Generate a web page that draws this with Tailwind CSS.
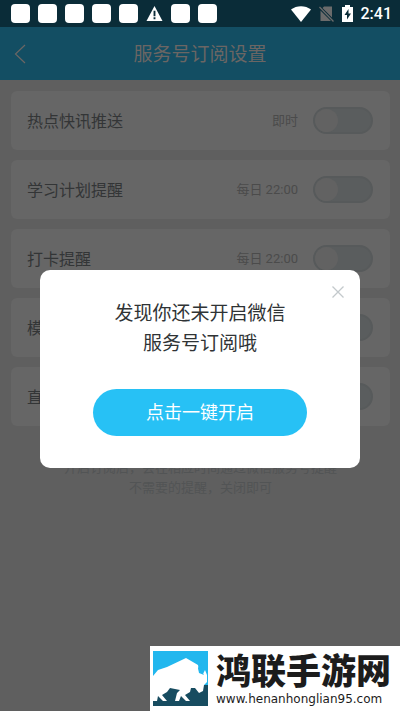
<!DOCTYPE html>
<html lang="zh-CN">
<head>
<meta charset="utf-8">
<meta name="viewport" content="width=device-width, initial-scale=1">
<title>服务号订阅设置</title>
<script src="https://cdn.jsdelivr.net/npm/@tailwindcss/browser@4"></script>
</head>
<body class="min-h-screen bg-[#5f5f5f] font-['Roboto','Noto_Sans_CJK_SC',sans-serif] text-[#333536]">
<div class="flex h-[27px] items-center justify-between bg-[#0a2c38] pr-2 pl-[11px] text-white" role="status">
  <div class="flex items-center gap-2">
    <span class="size-[19px] rounded bg-white"></span>
    <span class="size-[19px] rounded bg-white"></span>
    <span class="size-[19px] rounded bg-white"></span>
    <span class="size-[19px] rounded bg-white"></span>
    <span class="size-[19px] rounded bg-white"></span>
    <svg class="size-[17px]" viewBox="0 0 18 18" fill="currentColor"><path fill-rule="evenodd" d="M9 1L17.500 17H.5ZM8 6v6h2V6ZM8 13v2h2v-2Z"/></svg>
    <span class="size-[19px] rounded bg-white"></span>
    <span class="size-[19px] rounded bg-white"></span>
  </div>
  <div class="flex items-center gap-2">
    <svg class="h-4 w-5" viewBox="0 0 20 16" fill="currentColor"><path d="M0 3.500C5.500-1 14.500-1 20 3.500L10 16Z"/></svg>
    <svg class="h-4 w-[15px]" viewBox="0 0 15 16"><path fill="#6b6b6b" d="M5 .5h8v11L3.500 2ZM1.500 4.500L12 15H1.500Z"/><path stroke="#6b6b6b" stroke-width="1.300" d="M.5 1L14.500 15.500"/></svg>
    <svg class="h-[17px] w-[11px]" viewBox="0 0 11 17" fill="currentColor"><path fill-rule="evenodd" d="M3 0h5v2h3v15H0V2h3ZM6.500 4L2.500 10h2.500v4.500L9 8.500h-2.500Z"/></svg>
    <span class="text-base leading-5 font-medium">2:41</span>
  </div>
</div>
<header class="grid h-[53px] grid-cols-[1fr_auto_1fr] items-center bg-[#134e63] px-[14px] text-[#6b6664]">
  <button class="flex h-8 w-8 items-center" type="button" aria-label="返回"><svg class="h-5 w-3" viewBox="0 0 12 20" fill="none" stroke="currentColor" stroke-width="1.200"><path d="M11 1L1.500 10L11 19"/></svg></button>
  <h1 class="pt-[3px] text-[19px] leading-7">服务号订阅设置</h1>
</header>
<main class="pt-[11px] pr-[10px] pl-[11px]">
  <ul class="flex flex-col gap-[10px]">
    <li class="flex h-[59px] items-center rounded-md bg-[#666] pr-[17px] pl-4">
      <label class="flex-1 pt-[2px] text-base" for="s1">热点快讯推送</label><span class="mr-[15px] text-[13px] text-[#4b4b4b]">即时</span>
      <input id="s1" type="checkbox" role="switch" class="h-[27px] w-[60px] appearance-none rounded-full border-2 border-[#575a5b] bg-[#5a5d5e] before:block before:size-[23px] before:rounded-full before:bg-[#626262]">
    </li>
    <li class="flex h-[59px] items-center rounded-md bg-[#666] pr-[17px] pl-4">
      <label class="flex-1 pt-[2px] text-base" for="s2">学习计划提醒</label><span class="mr-[15px] text-[13px] text-[#4b4b4b]">每日 22:00</span>
      <input id="s2" type="checkbox" role="switch" class="h-[27px] w-[60px] appearance-none rounded-full border-2 border-[#575a5b] bg-[#5a5d5e] before:block before:size-[23px] before:rounded-full before:bg-[#626262]">
    </li>
    <li class="flex h-[59px] items-center rounded-md bg-[#666] pr-[17px] pl-4">
      <label class="flex-1 pt-[2px] text-base" for="s3">打卡提醒</label><span class="mr-[15px] text-[13px] text-[#4b4b4b]">每日 22:00</span>
      <input id="s3" type="checkbox" role="switch" class="h-[27px] w-[60px] appearance-none rounded-full border-2 border-[#575a5b] bg-[#5a5d5e] before:block before:size-[23px] before:rounded-full before:bg-[#626262]">
    </li>
    <li class="flex h-[59px] items-center rounded-md bg-[#666] pr-[17px] pl-4">
      <label class="flex-1 pt-[2px] text-base" for="s4">模</label>
      <input id="s4" type="checkbox" role="switch" class="h-[27px] w-[60px] appearance-none rounded-full border-2 border-[#575a5b] bg-[#5a5d5e] before:block before:size-[23px] before:rounded-full before:bg-[#626262]">
    </li>
    <li class="flex h-[59px] items-center rounded-md bg-[#666] pr-[17px] pl-4">
      <label class="flex-1 pt-[2px] text-base" for="s5">直</label>
      <input id="s5" type="checkbox" role="switch" class="h-[27px] w-[60px] appearance-none rounded-full border-2 border-[#575a5b] bg-[#5a5d5e] before:block before:size-[23px] before:rounded-full before:bg-[#626262]">
    </li>
  </ul>
  <p class="mt-8 text-center text-[13px] leading-5 text-[#525455]">开启订阅后，会在相应时间通过微信服务号提醒<br>不需要的提醒，关闭即可</p>
</main>
<section class="absolute inset-x-10 top-[270px] rounded-[10px] bg-white px-[53px] pt-[29px] pb-8 text-center" role="dialog" aria-modal="true" aria-labelledby="dialog-title">
  <button class="absolute top-[15px] right-[15px] p-px text-[#c3c9cc]" type="button" aria-label="关闭"><svg class="size-3" viewBox="0 0 12 12" fill="none" stroke="currentColor" stroke-width="1.300"><path d="M.5.5L11.500 11.500M11.500.5L.5 11.500"/></svg></button>
  <h2 id="dialog-title" class="text-[19px] leading-[30px] whitespace-nowrap text-[#2f3335]">发现你还未开启微信<br>服务号订阅哦</h2>
  <button class="mt-[30px] h-[47px] w-full rounded-full bg-[#27c1f5] text-lg text-white" type="button">点击一键开启</button>
</section>
<aside class="absolute right-0 bottom-0 flex h-[65px] w-[250px] items-start gap-2 bg-white pt-[5px] pl-[3px] text-[#1c1c1c]">
  <svg class="h-[55px] w-[55px] shrink-0" viewBox="0 0 55 55">
    <path fill="#22b7ee" d="M0 0H55V55H0Z"/><path fill="#174c60" d="M0 34H55V55H0Z"/>
    <path fill="#fff" d="M0 25L5 19L14 16L33 7L45 14L46 20L50 23L52 19L54 24V31L51 34L50 40L46 42L42 37L38 37L37 41L32 44L37 50H33L28 45L26 50H22L24 42L27 39L17 37L14 41L9 44L14 50H10L5 45L4 50H0Z"/>
    <path fill="#22b7ee" d="M49 12L45 17L46 22L51 24L48 19Z"/>
  </svg>
  <div>
    <div class="font-['Noto_Sans_CJK_SC',sans-serif] text-[35px] leading-9 font-black whitespace-nowrap">鸿联手游网</div>
    <div class="mt-1 font-['DejaVu_Sans',sans-serif] text-[12px] leading-4">www.henanhonglian95.com</div>
  </div>
</aside>
</body>
</html>
